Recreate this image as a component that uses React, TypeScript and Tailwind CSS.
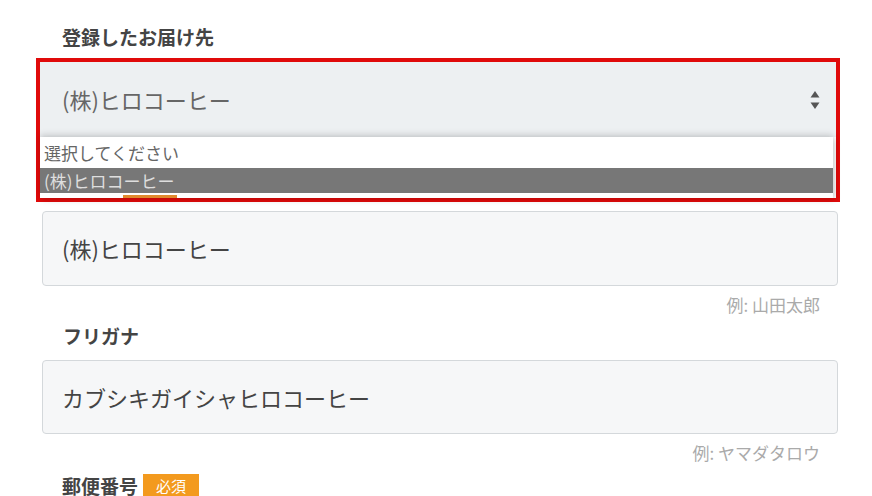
import React from "react";

const font = "font-['Noto_Sans_CJK_JP','Noto_Sans',sans-serif]";

const App = () => {
  return (
    <div className={`w-[872px] h-[496px] bg-white overflow-hidden ${font}`}>
      <div className="pl-[42px] pr-[34px]">
        {/* Label: registered destination */}
        <p className="pt-[27px] pl-[20px] h-[47px] leading-[20px] text-[19px] font-bold text-[#444]">
          登録したお届け先
        </p>

        {/* Highlighted select with open list */}
        <div className="mt-[11px] ml-[-6px] mr-[-2px] border-[4px] border-[#e00a0a]">
          <div className="flex items-center justify-between h-[75px] bg-[#edf0f2] pl-[22px] pr-[16px]">
            <span className="text-[22px] text-[#666]">(株)ヒロコーヒー</span>
            <svg width="10" height="20" viewBox="0 0 10 20">
              <path d="M5 1 L9.5 7.5 H0.5 Z" fill="#555" />
              <path d="M5 19 L9.5 12.5 H0.5 Z" fill="#555" />
            </svg>
          </div>
          <div className="relative h-[61px] bg-white mr-[3px] shadow-[0_-3px_6px_rgba(0,0,0,0.12),2px_2px_6px_rgba(0,0,0,0.15)]">
            <div className="h-[31px] flex items-center pl-[4px] text-[17px] text-[#666]">選択してください</div>
            <div className="h-[25px] flex items-center pl-[4px] bg-[#777] text-[17px] text-[#dedede]">(株)ヒロコーヒー</div>
            <div className="absolute left-[83px] top-[58px] w-[54px] h-[3px] bg-[#e0892e]" />
          </div>
        </div>

        {/* Name */}
        <div className="mt-[9px] h-[75px] flex items-center border border-[#d4d8db] rounded-[4px] bg-[#f6f7f8] pl-[19px]">
          <span className="text-[22px] text-[#444]">(株)ヒロコーヒー</span>
        </div>
        <p className="mt-[9px] h-[20px] leading-[20px] text-right pr-[18px] text-[17px] text-[#aaa]">例: 山田太郎</p>

        {/* Furigana */}
        <p className="mt-[11px] pl-[21px] h-[20px] leading-[20px] text-[19px] font-bold text-[#444]">フリガナ</p>
        <div className="mt-[14px] h-[74px] flex items-center border border-[#d4d8db] rounded-[4px] bg-[#f6f7f8] pl-[19px]">
          <span className="text-[22px] text-[#444]">カブシキガイシャヒロコーヒー</span>
        </div>
        <p className="mt-[9px] h-[20px] leading-[20px] text-right pr-[18px] text-[17px] text-[#aaa]">例: ヤマダタロウ</p>

        {/* Postal code */}
        <div className="mt-[11px] pl-[20px] flex items-center gap-[5px]">
          <span className="h-[20px] leading-[20px] text-[19px] font-bold text-[#444]">郵便番号</span>
          <span className="h-[24px] px-[13px] flex items-center bg-[#f39a1e] text-[15px] text-white">必須</span>
        </div>
      </div>
    </div>
  );
};

export default App;
